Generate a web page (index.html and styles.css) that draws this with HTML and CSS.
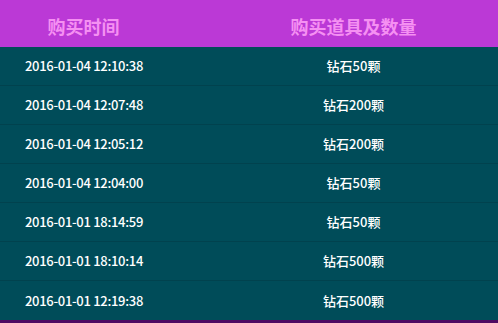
FILE: index.html
```html
<!DOCTYPE html>
<html lang="zh">
<head>
<meta charset="utf-8">
<title>购买记录</title>
<link rel="stylesheet" href="styles.css">
</head>
<body>
<div class="table">
  <div class="head">
    <div class="c1">购买时间</div>
    <div class="c2">购买道具及数量</div>
  </div>
  <div class="row"><div class="c1">2016-01-04 12:10:38</div><div class="c2">钻石50颗</div></div>
  <div class="row"><div class="c1">2016-01-04 12:07:48</div><div class="c2">钻石200颗</div></div>
  <div class="row"><div class="c1">2016-01-04 12:05:12</div><div class="c2">钻石200颗</div></div>
  <div class="row"><div class="c1">2016-01-04 12:04:00</div><div class="c2">钻石50颗</div></div>
  <div class="row"><div class="c1">2016-01-01 18:14:59</div><div class="c2">钻石50颗</div></div>
  <div class="row"><div class="c1">2016-01-01 18:10:14</div><div class="c2">钻石500颗</div></div>
  <div class="row"><div class="c1">2016-01-01 12:19:38</div><div class="c2">钻石500颗</div></div>
</div>
</body>
</html>
```
FILE: styles.css
```css
html, body {
  margin: 0;
  padding: 0;
}
body {
  width: 498px;
  height: 323px;
  background: #4e0a62;
  overflow: hidden;
  font-family: "Noto Sans CJK SC", "Noto Sans", sans-serif;
}
.table {
  display: flex;
  flex-direction: column;
  background: #004c59;
}
.head {
  display: grid;
  grid-template-columns: 167px 1fr;
  height: 47px;
  align-items: center;
  background: #bb39d6;
  color: #f590f2;
  font-size: 18px;
  font-weight: bold;
  line-height: 20px;
  padding-top: 4px;
  box-sizing: border-box;
}
.head .c1 {
  text-align: center;
}
.head .c2 {
  text-align: center;
  padding-left: 42px;
}
.row {
  display: grid;
  grid-template-columns: 167px 1fr;
  height: 39px;
  align-items: center;
  color: #ffffff;
  font-size: 13px;
  font-weight: 500;
  line-height: 16px;
  border-bottom: 1px solid #01424e;
  box-sizing: border-box;
}
.row:last-child {
  border-bottom: none;
}
.row .c1 {
  padding-left: 25px;
  letter-spacing: -0.3px;
}
.row .c2 {
  text-align: center;
  padding-left: 42px;
}
```
